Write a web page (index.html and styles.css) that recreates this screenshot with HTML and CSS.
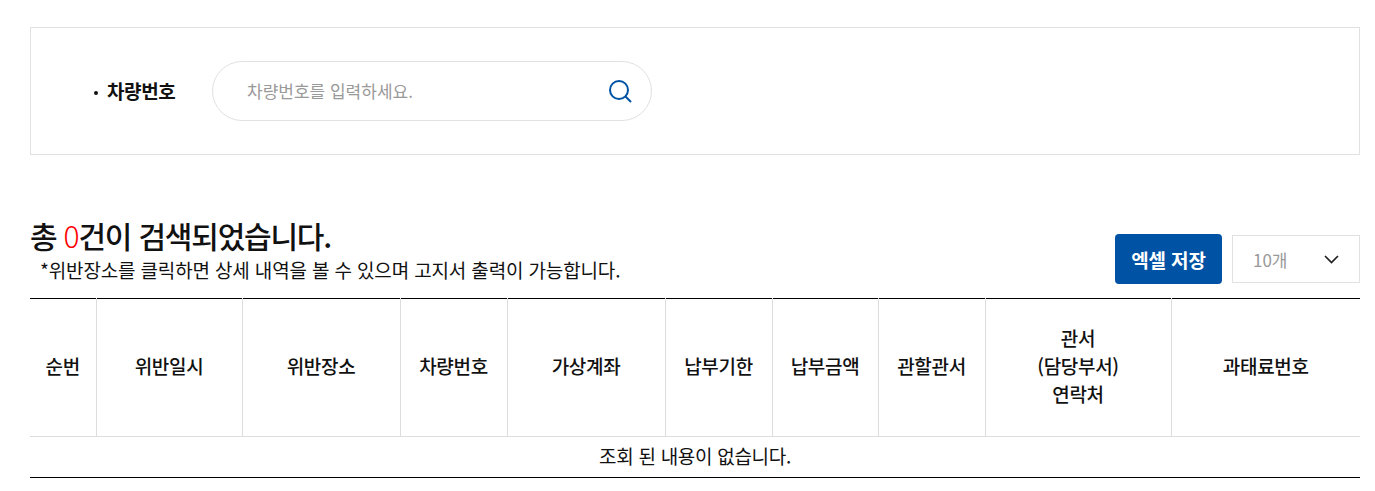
FILE: index.html
```html
<!DOCTYPE html>
<html lang="ko">
<head>
    <meta charset="UTF-8">
    <meta name="viewport" content="width=device-width, initial-scale=1.0">
    <title>차량번호 조회</title>
    <link rel="stylesheet" href="styles.css">
</head>
<body>

<div class="container">
    <div class="search-box">
        <span class="search-label">차량번호</span>
        <div class="search-field">
            <input type="text" placeholder="차량번호를 입력하세요.">
            <svg class="search-icon" width="26" height="26" viewBox="0 0 26 26" fill="none" stroke="#0052a4" stroke-width="2">
                <circle cx="12" cy="12" r="9"/>
                <path d="M18.5 18.5L24 24"/>
            </svg>
        </div>
    </div>

    <div class="result-head">
        <div>
            <h2 class="result-count">총 <em>0</em>건이 검색되었습니다.</h2>
            <p class="result-note">*위반장소를 클릭하면 상세 내역을 볼 수 있으며 고지서 출력이 가능합니다.</p>
        </div>
        <div class="result-tools">
            <button class="excel-btn" type="button">엑셀 저장</button>
            <div class="page-size">
                <span>10개</span>
                <svg width="15" height="9" viewBox="0 0 15 9" fill="none" stroke="#222" stroke-width="1.7">
                    <path d="M1 1l6.5 6.5L14 1"/>
                </svg>
            </div>
        </div>
    </div>

    <table class="result-table">
        <colgroup>
            <col class="c1"><col class="c2"><col class="c3"><col class="c4"><col class="c5">
            <col class="c6"><col class="c7"><col class="c8"><col class="c9"><col class="c10">
        </colgroup>
        <thead>
            <tr>
                <th>순번</th>
                <th>위반일시</th>
                <th>위반장소</th>
                <th>차량번호</th>
                <th>가상계좌</th>
                <th>납부기한</th>
                <th>납부금액</th>
                <th>관할관서</th>
                <th>관서<br>(담당부서)<br>연락처</th>
                <th>과태료번호</th>
            </tr>
        </thead>
        <tbody>
            <tr>
                <td colspan="10">조회 된 내용이 없습니다.</td>
            </tr>
        </tbody>
    </table>
</div>

</body>
</html>
```

FILE: styles.css
```css
* {
    box-sizing: border-box;
}
body {
    margin: 0;
    font-family: "Noto Sans CJK KR", "Noto Sans", sans-serif;
    color: #111;
    background-color: #fff;
}
.container {
    padding: 27px 15px 0 30px;
}
.search-box {
    display: flex;
    align-items: center;
    height: 128px;
    padding-left: 63px;
    border: 1px solid #e1e1e1;
}
.search-label {
    width: 118px;
    margin-top: -2px;
    font-size: 19px;
    font-weight: 700;
    letter-spacing: -0.4px;
}
.search-label::before {
    content: "";
    display: inline-block;
    width: 4px;
    height: 4px;
    margin-right: 9px;
    vertical-align: middle;
    border-radius: 50%;
    background-color: #111;
}
.search-field {
    display: flex;
    align-items: center;
    width: 440px;
    height: 60px;
    padding: 0 18px 0 34px;
    border: 1px solid #e1e1e1;
    border-radius: 30px;
}
.search-field input {
    flex: 1;
    min-width: 0;
    margin-top: -2px;
    border: 0;
    outline: 0;
    padding: 0;
    font-family: inherit;
    font-size: 17px;
}
.search-field input::placeholder {
    color: #999;
}
.result-head {
    display: flex;
    justify-content: space-between;
    align-items: flex-end;
    margin-top: 60px;
    height: 83px;
    padding-bottom: 13px;
}
.result-count {
    margin: 0;
    font-size: 30px;
    font-weight: 500;
    line-height: 40px;
    letter-spacing: -1.2px;
}
.result-count em {
    font-style: normal;
    font-weight: 300;
    color: #f00;
}
.result-note {
    margin: 0;
    padding-left: 10px;
    font-size: 19px;
    line-height: 30px;
    letter-spacing: -0.15px;
}
.result-tools {
    display: flex;
    align-items: center;
    gap: 10px;
    margin-bottom: 1px;
}
.excel-btn {
    width: 107px;
    height: 50px;
    padding: 0;
    border: 0;
    border-radius: 4px;
    background-color: #0052a4;
    color: #fff;
    font-family: inherit;
    font-size: 19px;
    font-weight: 700;
    letter-spacing: -0.1px;
}
.page-size {
    display: flex;
    justify-content: space-between;
    align-items: center;
    width: 128px;
    height: 48px;
    padding: 0 20px;
    border: 1px solid #e1e1e1;
    color: #999;
    font-size: 17px;
}
.result-table {
    width: 100%;
    border-collapse: collapse;
    table-layout: fixed;
    border-top: 1px solid #000;
    border-bottom: 1px solid #000;
}
.c1 { width: 66px; }
.c2 { width: 146px; }
.c3 { width: 158px; }
.c4 { width: 107px; }
.c5 { width: 158px; }
.c6 { width: 107px; }
.c7 { width: 106px; }
.c8 { width: 107px; }
.c9 { width: 186px; }
.result-table th {
    height: 138px;
    padding: 0 0 4px;
    border-left: 1px solid #ddd;
    border-bottom: 1px solid #ddd;
    font-size: 19px;
    font-weight: 500;
    line-height: 28px;
    letter-spacing: -0.3px;
}
.result-table th:first-child {
    border-left: 0;
}
.result-table td {
    height: 41px;
    padding: 0 0 3px;
    text-align: center;
    font-size: 19px;
    letter-spacing: -0.3px;
}
```
